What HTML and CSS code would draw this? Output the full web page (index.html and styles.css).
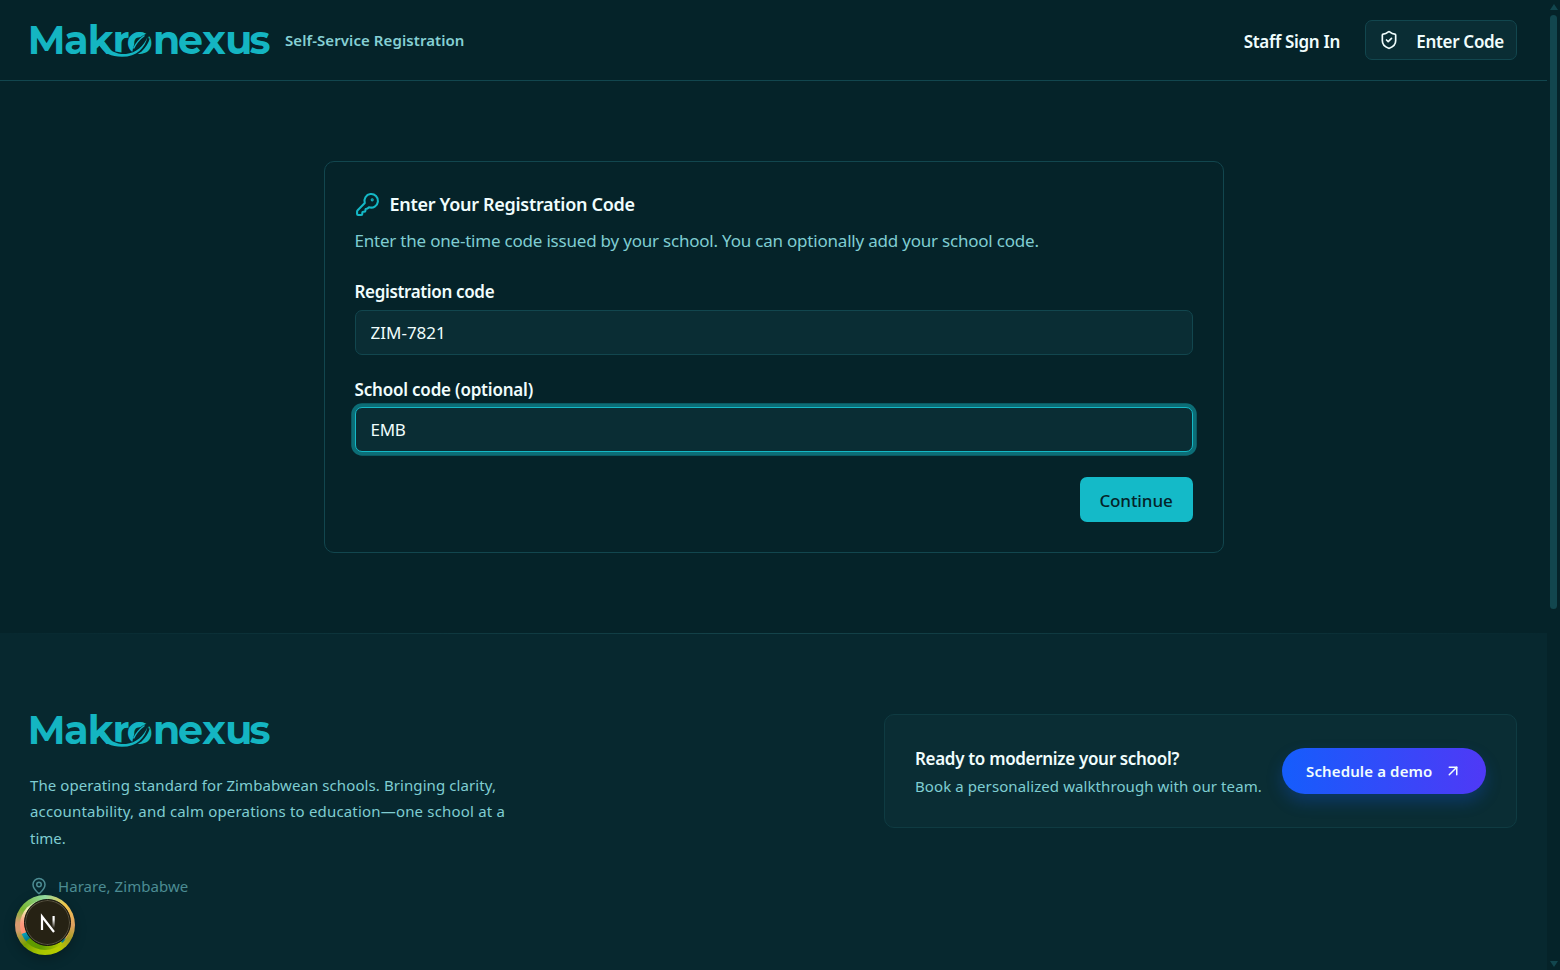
FILE: index.html
```html
<!DOCTYPE html>
<html lang="en">
<head>
    <meta charset="UTF-8">
    <meta name="viewport" content="width=device-width, initial-scale=1.0">
    <title>Makronexus - Self-Service Registration</title>
    <link rel="stylesheet" href="styles.css">
</head>
<body>
    <svg width="0" height="0" class="sprite">
        <symbol id="logo" viewBox="0 0 242 36" overflow="visible">
            <text class="logo-text" y="31" x="-2.200 34.300 57.800 82.600 96.800 123 148 172.200 195.200 219.500">Makronexus</text>
            <!-- leaf inside the "o" and the sweep that starts at the "k" -->
            <path class="logo-leaf" d="M102.500 28.500C103 20 109 13 119.500 9.500C119 18 113 25 105 29Z"/>
            <path class="logo-cut" d="M84 30.500C93 33 103 32 110 27C114 23 116.500 19 117.500 15"/>
            <path class="logo-fill" d="M69 22C74 30 81 33.800 92 33.800C107 33.800 115 25 117.500 14C114 23 106 30 96 31C87 31.500 79 28 74.500 21Z"/>
            <path class="logo-vein" d="M103.500 25.500C106 20.500 109.500 16 114.500 12.500"/>
        </symbol>
    </svg>

    <div class="page">
        <header class="header">
            <div class="brand">
                <svg class="logo" role="img" aria-label="Makronexus"><use href="#logo"/></svg>
                <span class="tagline">Self-Service Registration</span>
            </div>
            <nav class="nav">
                <a class="sign-in" href="#">Staff Sign In</a>
                <a class="code-btn" href="#">
                    <svg class="icon" width="20" height="20" viewBox="0 0 24 24"><path d="M20 13c0 5-3.500 7.500-7.660 8.950a1 1 0 0 1-.67-.01C7.500 20.500 4 18 4 13V6a1 1 0 0 1 1-1c2 0 4.500-1.200 6.240-2.720a1.170 1.170 0 0 1 1.520 0C14.510 3.810 17 5 19 5a1 1 0 0 1 1 1z"/><path d="m9 12 2 2 4-4"/></svg>
                    <span class="code-label">Enter Code</span>
                </a>
            </nav>
        </header>

        <main class="main">
            <form class="card">
                <h1 class="card-title">
                    <svg class="icon key" width="25" height="25" viewBox="0 0 24 24"><path d="M2.586 17.414A2 2 0 0 0 2 18.828V21a1 1 0 0 0 1 1h3a1 1 0 0 0 1-1v-1a1 1 0 0 1 1-1h1a1 1 0 0 0 1-1v-1a1 1 0 0 1 1-1h.172a2 2 0 0 0 1.414-.586l.814-.814a6.500 6.500 0 1 0-4-4z"/><circle cx="16.500" cy="7.500" r=".5" fill="currentColor"/></svg>
                    <span class="title-text">Enter Your Registration Code</span>
                </h1>
                <p class="card-desc">Enter the one-time code issued by your school. You can optionally add your school code.</p>
                <label class="label label-reg" for="regCode">Registration code</label>
                <input class="input" type="text" id="regCode" value="ZIM-7821">
                <label class="label label-school" for="schoolCode">School code (optional)</label>
                <input class="input active" type="text" id="schoolCode" value="EMB">
                <button class="continue" type="button">Continue</button>
            </form>
        </main>

        <footer class="footer">
            <div class="about">
                <svg class="logo" role="img" aria-label="Makronexus"><use href="#logo"/></svg>
                <p class="about-text">
                    <span class="line1">The operating standard for Zimbabwean schools. Bringing clarity,</span><br>
                    <span class="line2">accountability, and calm operations to education—one school at a</span><br>
                    <span class="line3">time.</span>
                </p>
                <div class="location">
                    <svg class="icon" width="18" height="18" viewBox="0 0 24 24"><path d="M20 10c0 4.993-5.539 10.193-7.399 11.799a1 1 0 0 1-1.202 0C9.539 20.193 4 14.993 4 10a8 8 0 0 1 16 0"/><circle cx="12" cy="10" r="3"/></svg>
                    <span class="place">Harare, Zimbabwe</span>
                </div>
            </div>
            <div class="demo">
                <div class="demo-text">
                    <h2 class="demo-title">Ready to modernize your school?</h2>
                    <p class="demo-desc">Book a personalized walkthrough with our team.</p>
                </div>
                <a class="demo-btn" href="#">
                    <span class="demo-label">Schedule a demo</span>
                    <svg class="icon" width="18" height="18" viewBox="0 0 24 24"><path d="M7 7h10v10"/><path d="M7 17 17 7"/></svg>
                </a>
            </div>
        </footer>
    </div>

    <div class="scrollbar">
        <span class="arrow-up"></span>
        <span class="thumb"></span>
        <span class="arrow-down"></span>
    </div>

    <div class="dev-badge">
        <div class="dev-core">
            <svg width="22" height="22" viewBox="0 0 22 22">
                <defs>
                    <linearGradient id="fade" x1="0" y1="0" x2="0" y2="1"><stop offset=".3" stop-color="#fff"/><stop offset="1" stop-color="#fff" stop-opacity="0"/></linearGradient>
                </defs>
                <path d="M5 18V4.500L17 20" fill="none" stroke="#fff" stroke-width="2.200"/>
                <rect x="15.500" y="4" width="2.200" height="12" fill="url(#fade)"/>
            </svg>
        </div>
    </div>
</body>
</html>
```

FILE: styles.css
```css
* {
    box-sizing: border-box;
}
body {
    --logo-bg: #052329;
    margin: 0;
    height: 970px;
    display: flex;
    overflow: hidden;
    background: #052329;
    color: #f0fdfd;
    font-family: "Segoe UI", "Noto Sans", "Open Sans", sans-serif;
    font-size: 17px;
}
h1, h2, p {
    margin: 0;
}
a {
    color: inherit;
    text-decoration: none;
}
.sprite {
    position: absolute;
}
.page {
    width: 1547px;
    display: flex;
    flex-direction: column;
}
.icon {
    flex: none;
    fill: none;
    stroke: currentColor;
    stroke-width: 2;
    stroke-linecap: round;
    stroke-linejoin: round;
}
span, .card-desc, .demo-title, .demo-desc, .label {
    white-space: nowrap;
}

/* logo */
.logo {
    display: block;
    width: 242px;
    height: 36px;
    overflow: visible;
}
.logo-text {
    font-family: Montserrat, Inter, sans-serif;
    font-size: 39.5px;
    font-weight: 700;
    fill: #14b5c2;
}
.logo-leaf {
    fill: var(--logo-bg);
}
.logo-cut {
    fill: none;
    stroke: var(--logo-bg);
    stroke-width: 4.5;
}
.logo-fill {
    fill: #14b5c2;
}
.logo-vein {
    fill: none;
    stroke: #14b5c2;
    stroke-width: 1.5;
}

/* header */
.header {
    height: 81px;
    padding: 0 30px;
    display: flex;
    align-items: center;
    justify-content: space-between;
    border-bottom: 1px solid #12464e;
}
.brand {
    display: flex;
    align-items: center;
    gap: 13px;
}
.brand .logo {
    margin-top: 2px;
}
.tagline {
    font-size: 15px;
    font-weight: 600;
    letter-spacing: 0.08px;
    color: #85d0d4;
}
.nav {
    display: flex;
    align-items: center;
    gap: 25px;
    font-weight: 600;
    letter-spacing: -0.32px;
}
.sign-in, .code-label {
    padding-top: 2px;
}
.code-btn {
    width: 152px;
    height: 40px;
    padding: 0 12px 0 13px;
    display: flex;
    align-items: center;
    justify-content: space-between;
    background: #0a2d34;
    border: 1px solid #12464e;
    border-radius: 7px;
}

/* registration card */
.main {
    height: 552px;
    padding-top: 80px;
}
.card {
    width: 900px;
    height: 392px;
    margin: 0 auto;
    padding: 30px;
    display: flex;
    flex-direction: column;
    border: 1px solid #12464e;
    border-radius: 10px;
}
.card-title {
    height: 25px;
    display: flex;
    align-items: center;
    gap: 10px;
    font-size: 18px;
    font-weight: 600;
    letter-spacing: -0.3px;
}
.title-text {
    padding-bottom: 1px;
}
.key {
    color: #14b8c6;
}
.card-desc {
    margin-top: 11px;
    line-height: 26px;
    letter-spacing: -0.21px;
    color: #7fcdd2;
}
.label {
    font-weight: 600;
    line-height: 26px;
}
.label-reg {
    margin-top: 25px;
    letter-spacing: -0.35px;
}
.label-school {
    margin-top: 22px;
    letter-spacing: -0.2px;
}
.input {
    width: 100%;
    height: 45px;
    margin-top: 5px;
    padding: 0 15px;
    background: #0a2d34;
    border: 1px solid #12464e;
    border-radius: 7px;
    color: #f0fdfd;
    font: inherit;
    outline: none;
}
.active {
    margin-top: 4px;
    border-color: #14b8c6;
    box-shadow: 0 0 0 3.75px #0c6d76;
    letter-spacing: -0.3px;
}
.continue {
    align-self: flex-end;
    width: 113px;
    height: 45px;
    margin-top: 25px;
    padding: 1px 0 0;
    background: #14bac8;
    border: none;
    border-radius: 7px;
    color: #052329;
    font: inherit;
    font-weight: 500;
    letter-spacing: -0.1px;
}

/* footer */
.footer {
    --logo-bg: #07282f;
    flex: 1;
    padding: 80px 30px 0;
    display: flex;
    justify-content: space-between;
    align-items: flex-start;
    background: linear-gradient(90deg, transparent, #14434a, transparent) top / 100% 1px no-repeat, #07282f;
}
.about-text {
    margin-top: 23px;
    font-size: 15px;
    line-height: 26.4px;
    color: #7fcdd2;
}
.line1 {
    letter-spacing: 0.09px;
}
.line2 {
    letter-spacing: 0.18px;
}
.location {
    margin-top: 24px;
    display: flex;
    align-items: center;
    gap: 10px;
    font-size: 15px;
    line-height: 22px;
    letter-spacing: 0.06px;
    color: #4c8c93;
}
.demo {
    width: 633px;
    height: 114px;
    margin-top: 1px;
    padding: 0 30px;
    display: flex;
    align-items: center;
    justify-content: space-between;
    background: #0a2d34;
    border: 1px solid #0f3b42;
    border-radius: 10px;
}
.demo-title {
    padding-top: 2px;
    font-size: 17px;
    font-weight: 600;
    line-height: 26px;
    letter-spacing: -0.32px;
}
.demo-desc {
    padding-top: 1px;
    font-size: 15px;
    line-height: 26px;
    letter-spacing: 0.09px;
    color: #7fcdd2;
}
.demo-btn {
    width: 204px;
    height: 46px;
    padding: 0 24px;
    display: flex;
    align-items: center;
    justify-content: space-between;
    border-radius: 23px;
    background: linear-gradient(90deg, #155dfc, #4f39f6);
    box-shadow: 0 8px 16px rgba(21, 93, 252, 0.25);
    font-size: 15px;
    font-weight: 600;
    letter-spacing: 0.13px;
}

/* scrollbar */
.scrollbar {
    width: 13px;
    display: flex;
    flex-direction: column;
    align-items: center;
}
.arrow-up {
    margin-top: 4px;
    border: 4px solid transparent;
    border-top: none;
    border-bottom: 6px solid #12464e;
}
.thumb {
    width: 7px;
    height: 594px;
    margin-top: 5px;
    border-radius: 4px;
    background: #12464e;
}
.arrow-down {
    margin-top: auto;
    margin-bottom: 3px;
    border: 4px solid transparent;
    border-bottom: none;
    border-top: 6px solid #12464e;
}

/* floating dev badge */
.dev-badge {
    position: absolute;
    left: 15px;
    top: 895px;
    width: 60px;
    height: 60px;
    border-radius: 50%;
    background: conic-gradient(#8fd8a0, #f2c84b 45deg, #e0a060 90deg, #a8a020 120deg, #b8cc00 150deg, #a4c400 195deg, #7aa000 225deg, #d89a70 260deg, #d89a70 275deg, #7ab830 305deg, #8fd8a0);
    box-shadow: 0 4px 12px rgba(0, 0, 0, 0.25);
}
.dev-badge::before {
    content: "";
    position: absolute;
    inset: 5px;
    border-radius: 50%;
    background: conic-gradient(#8fd8a0, #f2c84b 60deg, #e0a060 120deg, #067a8c 128deg, #067a8c 134deg, #b8cc00 138deg, #5f9a00 190deg, #5f9a00 228deg, #067a8c 230deg, #08a0b8 248deg, #ff8f70 250deg, #ff9a80 275deg, #f0f0b0 310deg, #8fd8a0);
}
.dev-core {
    position: absolute;
    left: 9px;
    top: 4px;
    width: 47px;
    height: 47px;
    display: flex;
    align-items: center;
    justify-content: center;
    border-radius: 50%;
    background: #262214;
    border: 1px solid #14130d;
    box-shadow: inset 0 0 0 1px #55503f;
}
```
